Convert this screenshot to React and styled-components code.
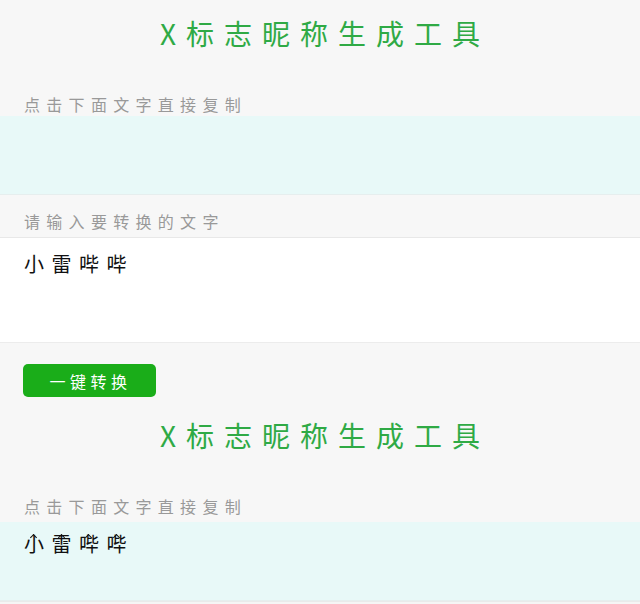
import { useState } from 'react'
import styled, { createGlobalStyle } from 'styled-components'

const GlobalStyle = createGlobalStyle`
    html, body {
        margin: 0;
        padding: 0;
        background-color: #f7f7f7;
        font-family: "Noto Sans CJK SC", "Noto Sans", sans-serif;
    }
`

const App = () => {
    const [input] = useState('小雷哔哔')
    const output = input.split('')

    return (
        <>
            <GlobalStyle />
            <Page>
                <Title>X标志昵称生成工具</Title>
                <Label>点击下面文字直接复制</Label>
                <ResultBox />

                <InputLabel>请输入要转换的文字</InputLabel>
                <InputBox>{input}</InputBox>
                <ConvertButton type='button'>一键转换</ConvertButton>

                <Title $top={5}>X标志昵称生成工具</Title>
                <Label $bottom={6}>点击下面文字直接复制</Label>
                <ResultBox>
                    {output.map((c, i) => (
                        // little hat drawn over each char
                        <MarkedChar key={i}>{c}</MarkedChar>
                    ))}
                </ResultBox>
                <Footer />
            </Page>
        </>
    )
}

export default App

const Page = styled.div`
    display: flex;
    flex-direction: column;
    width: 100%;
    min-height: 604px;
    background-color: #f7f7f7;
`

const Title = styled.h1`
    margin: ${props => props.$top || 0}px 0 0;
    padding: 15px 0 0 10px;
    text-align: center;
    font-size: 28px;
    font-weight: 400;
    line-height: 36px;
    letter-spacing: 10px;
    color: #2faa45;
`

const Label = styled.div`
    margin-top: 43px;
    padding: 0 24px ${props => props.$bottom || 2}px;
    font-size: 16px;
    line-height: 20px;
    letter-spacing: 6.3px;
    color: #999;
`

const ResultBox = styled.div`
    box-sizing: border-box;
    min-height: 79px;
    padding: 10px 24px;
    background-color: #e8f9f8;
    border-bottom: 1px solid #e6eeee;
    font-size: 20px;
    line-height: 24px;
    letter-spacing: 5.5px;
    color: #111;
`

const MarkedChar = styled.span`
    position: relative;
    display: inline-block;
    margin-right: 2px;

    &::before {
        content: '';
        position: absolute;
        top: 3px;
        left: 7px;
        width: 4px;
        height: 4px;
        border-top: 1.5px solid #111;
        border-left: 1.5px solid #111;
        transform: rotate(45deg);
    }
`

const InputLabel = styled.div`
    padding: 16px 24px 6px;
    font-size: 16px;
    line-height: 20px;
    letter-spacing: 6.3px;
    color: #999;
    border-bottom: 1px solid #e8e8e8;
`

const InputBox = styled.div`
    box-sizing: border-box;
    height: 105px;
    padding: 14px 24px;
    background-color: #fff;
    border-bottom: 1px solid #ececec;
    font-size: 20px;
    line-height: 24px;
    letter-spacing: 7.5px;
    color: #111;
`

const ConvertButton = styled.button`
    align-self: flex-start;
    margin: 21px 0 0 23px;
    width: 133px;
    height: 33px;
    border: none;
    border-radius: 5px;
    background-color: #1aad19;
    color: #fff;
    font-family: inherit;
    font-size: 16px;
    letter-spacing: 4.5px;
    padding-left: 8px;
    cursor: pointer;
`

const Footer = styled.div`
    flex: 1;
    border-top: 1px solid #eaeaea;
    background-color: #f5f5f5;
`
